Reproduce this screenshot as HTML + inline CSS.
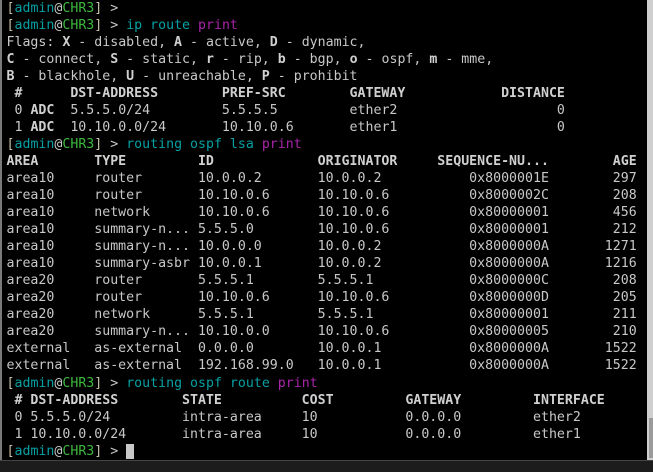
<!DOCTYPE html>
<html><head><style>
html,body{margin:0;padding:0;background:#000;width:653px;height:471px;overflow:hidden;}
#t{position:absolute;left:0;top:0;width:647px;height:460px;background:#000;overflow:hidden;}
pre{position:absolute;left:6.5px;top:-0.5px;margin:0;font-family:"DejaVu Sans Mono","Liberation Mono",monospace;font-size:13.25px;line-height:17.05px;color:#c8c8c8;}
b{font-weight:bold;color:#d0d0d0}
.a{color:#06a0a3}.g{color:#3cb83c}.c{color:#06a0a3}.m{color:#a825a8}.y{color:#c8c0a8}
.cur{background:#c8c8c8;color:#c8c8c8}
#lb{position:absolute;left:0;top:0;width:2px;height:460px;background:#7a7a7a}
#sb{position:absolute;left:647px;top:0;width:6px;height:460px;background:#cfcfcf}
#th{position:absolute;left:649px;top:418px;width:4px;height:40px;background:#9a9a9a}
#bt{position:absolute;left:0;top:460px;width:653px;height:11px;background:#1c1c1c;border-top:1px solid #444}
</style></head><body>
<div id="t"><pre><span class="y">[</span><span class="a">admin</span>@<span class="g">CHR3</span><span class="y">]</span> &gt;
<span class="y">[</span><span class="a">admin</span>@<span class="g">CHR3</span><span class="y">]</span> &gt; <span class="c">ip route</span> <span class="m">print</span>
Flags: <b>X</b> - disabled, <b>A</b> - active, <b>D</b> - dynamic,
<b>C</b> - connect, <b>S</b> - static, <b>r</b> - rip, <b>b</b> - bgp, <b>o</b> - ospf, <b>m</b> - mme,
<b>B</b> - blackhole, <b>U</b> - unreachable, <b>P</b> - prohibit
<b> #      DST-ADDRESS        PREF-SRC        GATEWAY            DISTANCE</b>
 0 <b>ADC</b>  5.5.5.0/24         5.5.5.5         ether2                    0
 1 <b>ADC</b>  10.10.0.0/24       10.10.0.6       ether1                    0
<span class="y">[</span><span class="a">admin</span>@<span class="g">CHR3</span><span class="y">]</span> &gt; <span class="c">routing ospf lsa</span> <span class="m">print</span>
<b>AREA       TYPE         ID             ORIGINATOR     SEQUENCE-NU...        AGE</b>
area10     router       10.0.0.2       10.0.0.2           0x8000001E        297
area10     router       10.10.0.6      10.10.0.6          0x8000002C        208
area10     network      10.10.0.6      10.10.0.6          0x80000001        456
area10     summary-n... 5.5.5.0        10.10.0.6          0x80000001        212
area10     summary-n... 10.0.0.0       10.0.0.2           0x8000000A       1271
area10     summary-asbr 10.0.0.1       10.0.0.2           0x8000000A       1216
area20     router       5.5.5.1        5.5.5.1            0x8000000C        208
area20     router       10.10.0.6      10.10.0.6          0x8000000D        205
area20     network      5.5.5.1        5.5.5.1            0x80000001        211
area20     summary-n... 10.10.0.0      10.10.0.6          0x80000005        210
external   as-external  0.0.0.0        10.0.0.1           0x8000000A       1522
external   as-external  192.168.99.0   10.0.0.1           0x8000000A       1522
<span class="y">[</span><span class="a">admin</span>@<span class="g">CHR3</span><span class="y">]</span> &gt; <span class="c">routing ospf route</span> <span class="m">print</span>
<b> # DST-ADDRESS        STATE          COST         GATEWAY         INTERFACE</b>
 0 5.5.5.0/24         intra-area     10           0.0.0.0         ether2
 1 10.10.0.0/24       intra-area     10           0.0.0.0         ether1
<span class="y">[</span><span class="a">admin</span>@<span class="g">CHR3</span><span class="y">]</span> &gt; <span class="cur">&nbsp;</span></pre></div>
<div id="lb"></div><div id="sb"></div><div id="th"></div><div id="bt"></div>
</body></html>
